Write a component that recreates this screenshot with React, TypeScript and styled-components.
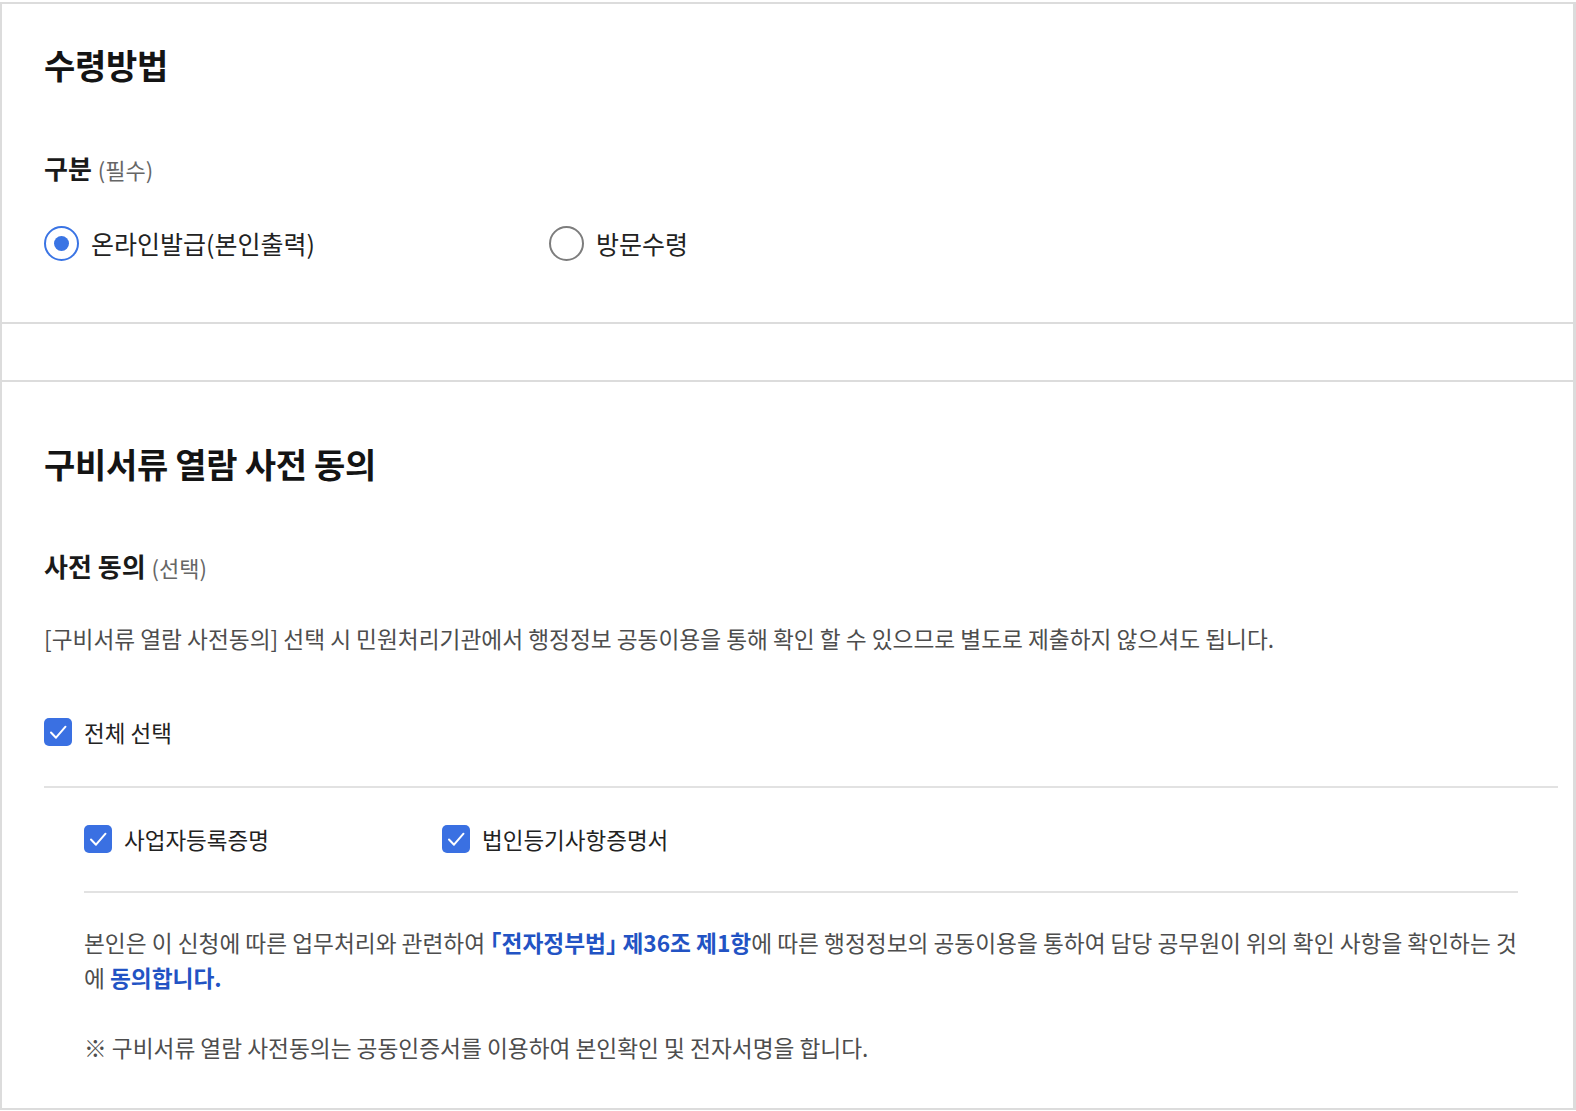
import * as React from 'react';
import styled, {createGlobalStyle} from 'styled-components';

const GlobalStyle = createGlobalStyle`
    html, body {
        margin: 0;
        padding: 0;
        background: #fff;
    }
    body {
        font-family: 'Noto Sans CJK KR', 'Noto Sans', sans-serif;
        color: #222;
    }
`;

/* tslint:disable:variable-name */
const Frame = styled.div`
    margin-top: 2px;
    border: 2px solid #dcdcdc;
    border-right-width: 3px;
    display: flex;
    flex-direction: column;
    height: 1108px;
    box-sizing: border-box;
`;

const Section = styled.section<{padTop: number; padBottom: number}>`
    display: flex;
    flex-direction: column;
    padding: ${p => p.padTop}px 15px ${p => p.padBottom}px 42px;
    border-bottom: ${p => (p.padBottom ? '2px solid #dcdcdc' : 'none')};
`;

const Band = styled.div`
    height: 56px;
    border-bottom: 2px solid #dcdcdc;
`;

const Title = styled.h2`
    margin: 0;
    font-size: 34px;
    line-height: 44px;
    font-weight: 700;
    color: #141414;
    letter-spacing: -0.3px;
`;

const FieldLabel = styled.div<{gap: number}>`
    margin-top: ${p => p.gap}px;
    font-size: 26px;
    line-height: 32px;
    font-weight: 700;
    color: #1a1a1a;
`;

const Hint = styled.span`
    font-size: 22px;
    font-weight: 400;
    color: #666;
    margin-left: 6px;
`;

const RadioRow = styled.div`
    margin-top: 40px;
    display: flex;
`;

const RadioItem = styled.label`
    width: 505px;
    display: flex;
    align-items: center;
    gap: 12px;
    font-size: 25px;
    line-height: 36px;
    color: #222;
`;

const RadioMark = styled.span<{checked?: boolean}>`
    width: 35px;
    height: 35px;
    box-sizing: border-box;
    border-radius: 50%;
    border: 2px solid ${p => (p.checked ? '#3a74e4' : '#7d7d7d')};
    display: flex;
    align-items: center;
    justify-content: center;
    flex-shrink: 0;

    &::after {
        content: '';
        width: 15px;
        height: 15px;
        border-radius: 50%;
        background: #3a74e4;
        display: ${p => (p.checked ? 'block' : 'none')};
    }
`;

const Desc = styled.p`
    margin: 41px 0 0;
    font-size: 22.7px;
    line-height: 30px;
    color: #4d4d4d;
`;

const CheckItem = styled.label`
    display: flex;
    align-items: center;
    gap: 12px;
    font-size: 22.5px;
    line-height: 28px;
    color: #222;
`;

const AllRow = styled.div`
    margin-top: 64px;
    padding-bottom: 40px;
    border-bottom: 2px solid #e2e2e2;
`;

const Group = styled.div`
    padding: 0 40px;
    display: flex;
    flex-direction: column;
`;

const DocRow = styled.div`
    display: grid;
    grid-template-columns: 358px 358px;
    padding: 37px 0 38px;
    border-bottom: 2px solid #e2e2e2;
`;

const Box = styled.span`
    width: 28px;
    height: 28px;
    border-radius: 5px;
    background: #3a70e2;
    display: flex;
    align-items: center;
    justify-content: center;
    flex-shrink: 0;
`;

const Agreement = styled.p`
    margin: 32px 0 0;
    font-size: 22.7px;
    line-height: 35px;
    color: #4d4d4d;
`;

const Strong = styled.strong`
    color: #2253c4;
    font-weight: 700;
`;

const Bracket = styled.span`
    font-feature-settings: 'halt';
`;

const Note = styled.p`
    margin: 38px 0 0;
    font-size: 22.7px;
    line-height: 30px;
    color: #4d4d4d;
`;
/* tslint:enable:variable-name */

function Check(): JSX.Element {
    return (
        <Box>
            <svg width="28" height="28" viewBox="0 0 28 28" fill="none">
                <path d="M7 14.5l5 5.2 9.5-11" stroke="#fff" strokeWidth="2" strokeLinecap="round" strokeLinejoin="round" />
            </svg>
        </Box>
    );
}

export default function App(): JSX.Element {
    return (
        <>
            <GlobalStyle />
            <Frame>
                <Section padTop={39} padBottom={61}>
                    <Title>수령방법</Title>
                    <FieldLabel gap={65}>
                        구분<Hint>(필수)</Hint>
                    </FieldLabel>
                    <RadioRow>
                        <RadioItem>
                            <RadioMark checked />
                            온라인발급(본인출력)
                        </RadioItem>
                        <RadioItem>
                            <RadioMark />
                            방문수령
                        </RadioItem>
                    </RadioRow>
                </Section>
                <Band />
                <Section padTop={60} padBottom={0}>
                    <Title>구비서류 열람 사전 동의</Title>
                    <FieldLabel gap={64}>
                        사전 동의<Hint>(선택)</Hint>
                    </FieldLabel>
                    <Desc>
                        [구비서류 열람 사전동의] 선택 시 민원처리기관에서 행정정보 공동이용을 통해 확인 할 수 있으므로 별도로
                        제출하지 않으셔도 됩니다.
                    </Desc>
                    <AllRow>
                        <CheckItem>
                            <Check />
                            전체 선택
                        </CheckItem>
                    </AllRow>
                    <Group>
                        <DocRow>
                            <CheckItem>
                                <Check />
                                사업자등록증명
                            </CheckItem>
                            <CheckItem>
                                <Check />
                                법인등기사항증명서
                            </CheckItem>
                        </DocRow>
                        <Agreement>
                            본인은 이 신청에 따른 업무처리와 관련하여{' '}
                            <Strong>
                                <Bracket>「</Bracket>전자정부법<Bracket>」</Bracket> 제36조 제1항
                            </Strong>
                            에 따른 행정정보의 공동이용을 통하여 담당 공무원이 위의 확인 사항을 확인하는 것에{' '}
                            <Strong>동의합니다.</Strong>
                        </Agreement>
                        <Note>※ 구비서류 열람 사전동의는 공동인증서를 이용하여 본인확인 및 전자서명을 합니다.</Note>
                    </Group>
                </Section>
            </Frame>
        </>
    );
}
